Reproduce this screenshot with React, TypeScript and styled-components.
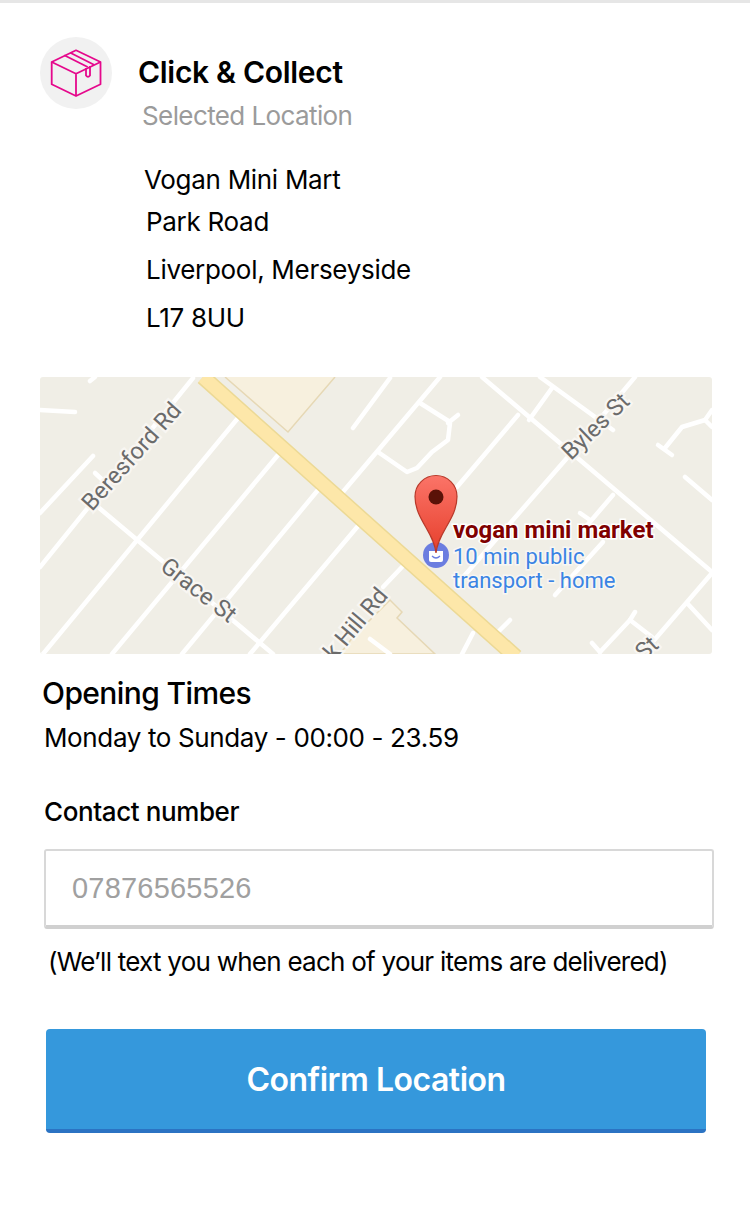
import * as React from "react"
import styled, { createGlobalStyle } from "styled-components"

const GlobalStyle = createGlobalStyle`
  html, body {
    margin: 0;
    padding: 0;
    background: #fff;
  }
  body {
    font-family: Inter, "Liberation Sans", sans-serif;
    color: #000;
  }
`

const Page = styled.div`
  width: 750px;
  height: 1215px;
  overflow: hidden;
  box-sizing: border-box;
  border-top: 3px solid #e6e6e6;
`
const Header = styled.header`
  display: flex;
  gap: 26px;
  padding: 34px 0 0 40px;
`
const IconCircle = styled.div`
  width: 72px;
  height: 72px;
  flex: none;
  border-radius: 50%;
  background: #f1f1f1;
`
const HeaderText = styled.div`
  display: flex;
  flex-direction: column;
  padding-top: 16px;
`
const Title = styled.h1`
  margin: 0;
  font-size: 30px;
  line-height: 38px;
  font-weight: 600;
  letter-spacing: -0.3px;
`
const Subtitle = styled.div`
  margin: 9px 0 0 4px;
  font-size: 26px;
  line-height: 32px;
  letter-spacing: -0.6px;
  color: #9b9b9b;
`
const Address = styled.address`
  margin: 30px 0 0 146px;
  font-style: normal;
  font-size: 26px;
  letter-spacing: -0.3px;
`
const ShopName = styled.div`
  margin-left: -2px;
  line-height: 36px;
`
const AddressLine = styled.div`
  line-height: 48px;
`
const MapFrame = styled.div`
  width: 672px;
  height: 277px;
  margin: 35px 0 0 40px;
  border-radius: 3px;
  overflow: hidden;
  background: #f0eee6;
`
const Heading = styled.h2`
  margin: 20px 0 0 42px;
  font-size: 30px;
  line-height: 38px;
  font-weight: 500;
  letter-spacing: -0.6px;
`
const Hours = styled.div`
  margin: 7px 0 0 44px;
  font-size: 26px;
  line-height: 38px;
  letter-spacing: -0.37px;
`
const FieldLabel = styled.label`
  display: block;
  margin: 36px 0 0 44px;
  font-size: 26px;
  line-height: 38px;
  font-weight: 500;
  letter-spacing: -0.4px;
`
const PhoneInput = styled.input`
  display: block;
  box-sizing: border-box;
  width: 670px;
  height: 80px;
  margin: 18px 0 0 44px;
  padding: 0 26px;
  border: 2px solid #d8d8d8;
  border-bottom: 4px solid #d0d0d0;
  border-radius: 3px;
  background: #fff;
  outline: none;
  font-family: "Liberation Sans", Arial, sans-serif;
  font-size: 29px;
  letter-spacing: 0.2px;

  &::placeholder {
    color: #a0a0a0;
    opacity: 1;
  }
`
const Hint = styled.p`
  margin: 14px 0 0 48px;
  font-size: 26px;
  line-height: 38px;
  letter-spacing: -0.75px;
`
const ConfirmButton = styled.button`
  display: block;
  box-sizing: border-box;
  width: 660px;
  height: 104px;
  margin: 48px 0 0 46px;
  padding: 0;
  border: 0;
  border-bottom: 4px solid #2b73c3;
  border-radius: 4px;
  background: #3598dc;
  color: #fff;
  font-family: Inter, "Liberation Sans", sans-serif;
  font-size: 32px;
  font-weight: 600;
  letter-spacing: -0.5px;
`
const StreetLabel = styled.text`
  font-family: Roboto, sans-serif;
  font-size: 23.5px;
  fill: #6b6b6b;
  stroke: #f8f6f2;
  stroke-width: 4.5px;
  paint-order: stroke;
`
const PlaceName = styled.text`
  font-family: Roboto, sans-serif;
  font-size: 24px;
  font-weight: 700;
  fill: #800000;
  stroke: #ffffff;
  stroke-width: 3px;
  paint-order: stroke;
`
const TransitLine = styled.text`
  font-family: Roboto, sans-serif;
  font-size: 22px;
  fill: #3b84e4;
  stroke: #f8f7f3;
  stroke-width: 3px;
  paint-order: stroke;
`

const BoxIcon = () => (
  <svg width="72" height="72" viewBox="0 0 72 72" fill="none" stroke="#e5088c" strokeWidth="1.8" strokeLinejoin="round">
    <path d="M36 13.300 60.500 25V47.300L36 59 11.700 47.300V25Z" />
    <path d="M11.700 25 36 36.700 60.500 25M36 36.700V59" />
    <path d="M24.300 18.300 47.700 30M30.300 15.700 54 27.700" />
    <path d="M46 31V38.500Q48 41 50 38.500V29" />
  </svg>
)

const streets = [
  "M153 1 0 190",
  "M50 4 55 0",
  "M0 33 35 35",
  "M53 79 0 136",
  "M55 96 70 110",
  "M58 130 233 277",
  "M198 41 3 277",
  "M238 78 72 277",
  "M278 113 142 277",
  "M318 149 210 277",
  "M302 116 400 0",
  "M313 51 350 1",
  "M442 0 672 195",
  "M500 0 573 53",
  "M512 11 489 43",
  "M478 38 417 110",
  "M380 26 410 45",
  "M418 38 408 46",
  "M410 46 408 63 392 75 377 91 367 95 338 75",
  "M595 0 527 81 418 206",
  "M573 118 543 153",
  "M540 136 550 143",
  "M563 165 515 218",
  "M672 196 610 268",
  "M647 226 672 253",
  "M595 235 590 243 560 275",
  "M590 243 612 260",
  "M552 266 560 275",
  "M618 68 632 78",
  "M625 71 642 50 665 43 672 33",
  "M665 43 672 50",
  "M645 100 672 123",
  "M362 190 343 210",
  "M470 243 457 256",
  "M433 256 422 277",
  "M330 262 350 277",
]

const StreetMap = () => (
  <svg width="672" height="277" viewBox="0 0 672 277">
    <defs>
      <linearGradient id="pinFill" x1="0" y1="0" x2="0" y2="1">
        <stop offset="0" stopColor="#fb7468" />
        <stop offset="1" stopColor="#e63f2c" />
      </linearGradient>
    </defs>
    <path d="M185 0 248 55 295 0" fill="#f7f0de" stroke="#e6d8b5" strokeWidth="1.5" />
    <path d="M313 260 350 223 362 235 357 241 395 277H300Z" fill="#f7f0de" stroke="#e6d8b5" strokeWidth="1.5" />
    {streets.map((d) => (
      <path key={d} d={d} fill="none" stroke="#fff" strokeWidth="4.5" strokeLinecap="round" strokeLinejoin="round" />
    ))}
    <path d="M385 196 472 275" fill="none" stroke="#b9b6ae" strokeWidth="1.5" transform="translate(3 -1)" />
    <path d="M163 0 476 280" fill="none" stroke="#ecd995" strokeWidth="16" />
    <path d="M163 0 476 280" fill="none" stroke="#fde7a9" strokeWidth="13" />

    <StreetLabel transform="translate(52 135) rotate(-48)">Beresford Rd</StreetLabel>
    <StreetLabel transform="translate(119 192) rotate(38)">Grace St</StreetLabel>
    <StreetLabel textAnchor="end" transform="translate(349 219) rotate(-50)">Park Hill Rd</StreetLabel>
    <StreetLabel transform="translate(531 84) rotate(-44)">Byles St</StreetLabel>
    <StreetLabel transform="translate(604 284) rotate(-42)">St</StreetLabel>

    <circle cx="396" cy="178" r="13" fill="#6b7de0" />
    <path d="M389 174H403V183Q403 185 401 185H391Q389 185 389 183Z" fill="#fff" />
    <path d="M392 179Q396 183 400 179" fill="none" stroke="#6b7de0" strokeWidth="1.2" />
    <path
      d="M396 176C394 155 375 142 375 119.500A21 21 0 0 1 417 119.500C417 142 398 155 396 176Z"
      fill="url(#pinFill)"
      stroke="#b8392a"
      strokeWidth="1.2"
    />
    <circle cx="396" cy="120" r="7.500" fill="#5a1208" />

    <PlaceName x="413" y="161">vogan mini market</PlaceName>
    <TransitLine x="413" y="187">10 min public</TransitLine>
    <TransitLine x="413" y="211">transport - home</TransitLine>
  </svg>
)

export default function App() {
  return (
    <Page>
      <GlobalStyle />
      <Header>
        <IconCircle>
          <BoxIcon />
        </IconCircle>
        <HeaderText>
          <Title>Click &amp; Collect</Title>
          <Subtitle>Selected Location</Subtitle>
        </HeaderText>
      </Header>
      <Address>
        <ShopName>Vogan Mini Mart</ShopName>
        <AddressLine>Park Road</AddressLine>
        <AddressLine>Liverpool, Merseyside</AddressLine>
        <AddressLine>L17 8UU</AddressLine>
      </Address>
      <MapFrame>
        <StreetMap />
      </MapFrame>
      <Heading>Opening Times</Heading>
      <Hours>Monday to Sunday - 00:00 - 23.59</Hours>
      <FieldLabel htmlFor="contact-number">Contact number</FieldLabel>
      <PhoneInput id="contact-number" placeholder="07876565526" />
      <Hint>(We’ll text you when each of your items are delivered)</Hint>
      <ConfirmButton>Confirm Location</ConfirmButton>
    </Page>
  )
}
